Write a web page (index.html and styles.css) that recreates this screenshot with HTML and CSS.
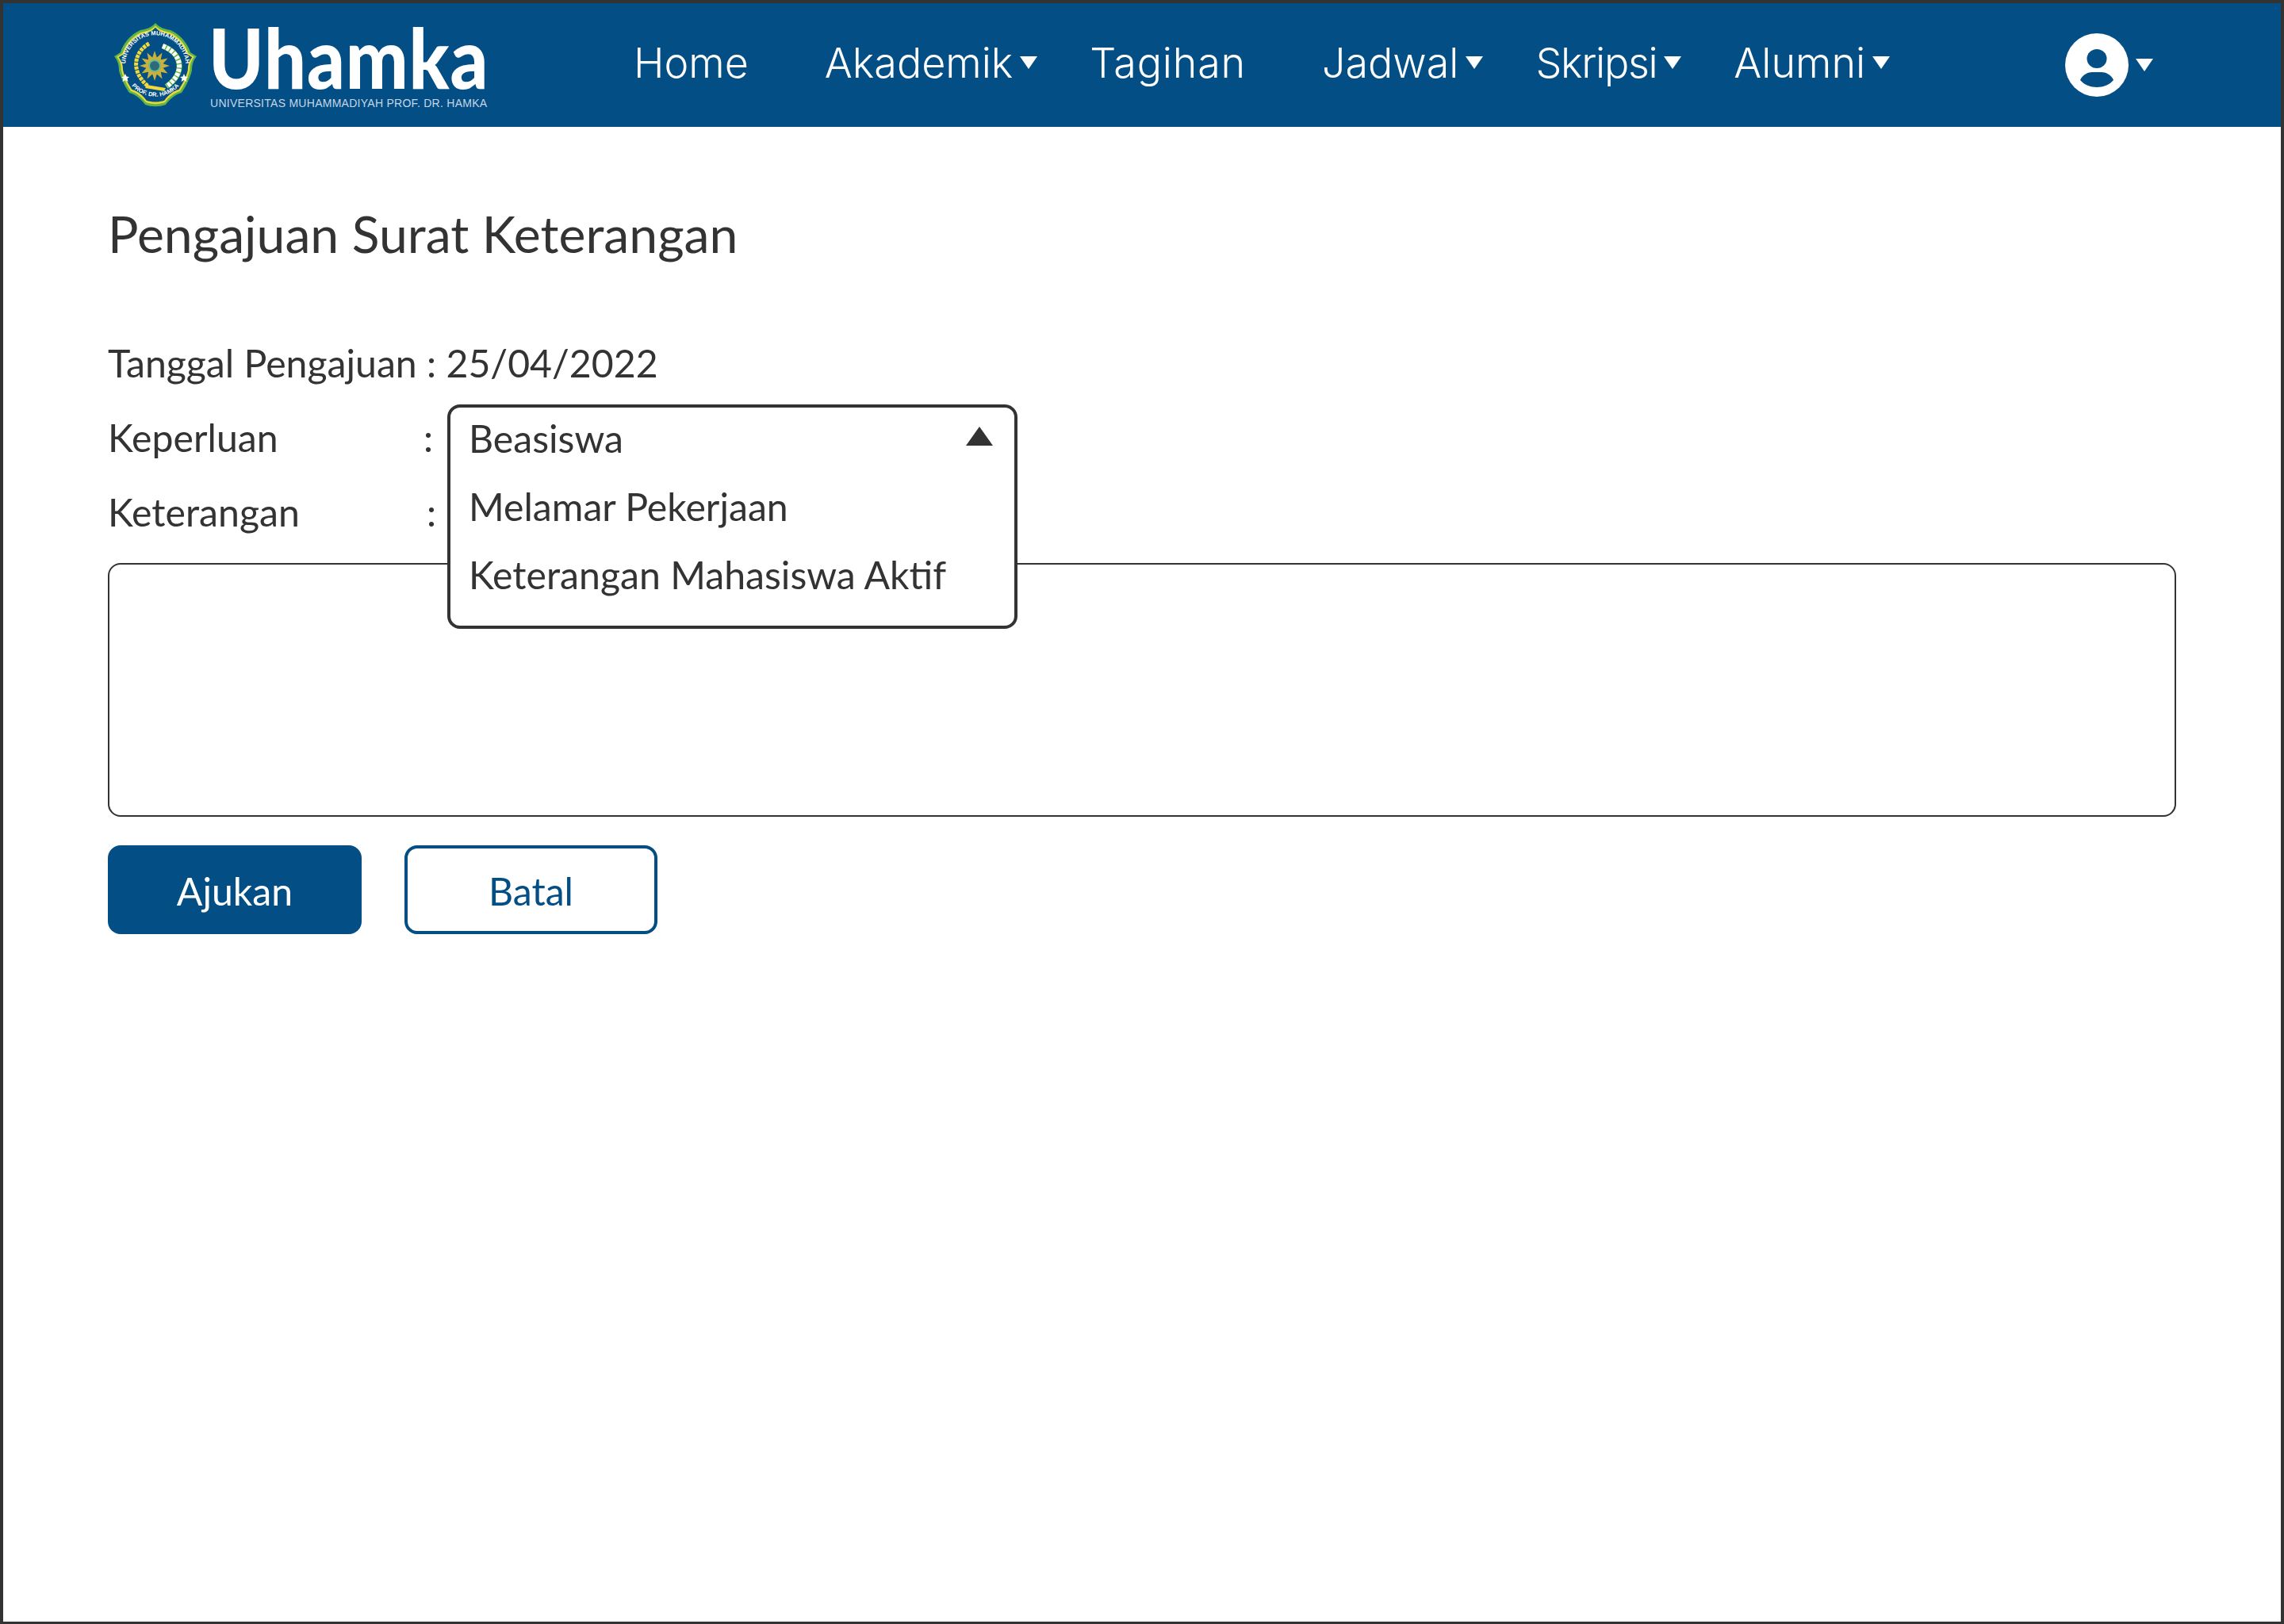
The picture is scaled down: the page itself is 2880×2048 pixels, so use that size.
FILE: index.html
```html
<!DOCTYPE html>
<html lang="en">
<head>
    <meta charset="UTF-8">
    <title>Pengajuan Surat Keterangan</title>
    <link rel="stylesheet" href="styles.css">
</head>
<body>
    <div class="frame">
        <header class="navbar">
            <div class="logo">
                <svg class="seal" viewBox="0 0 106 106" width="106" height="106">
                    <defs>
                        <path id="arc-top" d="M16 62 A38 38 0 1 1 90 62"/>
                        <path id="arc-bottom" d="M22 78 A40 40 0 0 0 84 78"/>
                    </defs>
                    <path fill="#5fb548" d="M53 0C58 6 66 8 72 9C84 14 94 26 97 37L105 42C100 48 99 54 99 60C96 72 90 82 86 88C78 90 70 97 66 103C58 106 48 106 40 103C36 97 28 90 20 88C16 82 10 72 7 60C7 54 6 48 1 42L9 37C12 26 22 14 34 9C40 8 48 6 53 0Z"/>
                    <path fill="#e8d83a" transform="translate(3.2 3.2) scale(.94)" d="M53 0C58 6 66 8 72 9C84 14 94 26 97 37L105 42C100 48 99 54 99 60C96 72 90 82 86 88C78 90 70 97 66 103C58 106 48 106 40 103C36 97 28 90 20 88C16 82 10 72 7 60C7 54 6 48 1 42L9 37C12 26 22 14 34 9C40 8 48 6 53 0Z"/>
                    <path fill="#024e85" transform="translate(5.8 5.8) scale(.89)" d="M53 0C58 6 66 8 72 9C84 14 94 26 97 37L105 42C100 48 99 54 99 60C96 72 90 82 86 88C78 90 70 97 66 103C58 106 48 106 40 103C36 97 28 90 20 88C16 82 10 72 7 60C7 54 6 48 1 42L9 37C12 26 22 14 34 9C40 8 48 6 53 0Z"/>
                    <text class="seal-text"><textPath href="#arc-top" startOffset="50%" text-anchor="middle">UNIVERSITAS MUHAMMADIYAH</textPath></text>
                    <text class="seal-text"><textPath href="#arc-bottom" startOffset="50%" text-anchor="middle">PROF. DR. HAMKA</textPath></text>
                    <path fill="none" stroke="#f2d83b" stroke-width="5" stroke-dasharray="4 1" d="M45 26C27 36 20 60 44 80"/>
                    <path fill="none" stroke="#5fb548" stroke-width="7" d="M62 29C86 38 92 62 67 80"/>
                    <path fill="none" stroke="#fff" stroke-width="6" stroke-dasharray="4 1.500" d="M62 29C86 38 92 62 67 80"/>
                    <path fill="#f2d83b" d="M42 78L66 82L64 86L40 82Z"/>
                    <path fill="#c9b23a" d="M52 35L54.800 43.400L61.500 37.500L59.800 46.200L68.500 44.500L62.600 51.200L71 54L62.600 56.800L68.500 63.500L59.800 61.800L61.500 70.500L54.800 64.600L52 73L49.200 64.600L42.500 70.500L44.200 61.800L35.500 63.500L41.400 56.800L33 54L41.400 51.200L35.500 44.500L44.200 46.200L42.500 37.500L49.200 43.400Z"/>
                    <circle cx="52" cy="54" r="8" fill="#6dbb8e"/>
                    <circle cx="52" cy="54" r="6" fill="#2f6a7c"/>
                    <path fill="#fff" d="M13 60L14.500 63.500L18 64L15.500 66L16.500 70L13 68L9.500 70L10.500 66L8 64L11.500 63.500Z" transform="translate(2 4)"/>
                    <path fill="#fff" d="M13 60L14.500 63.500L18 64L15.500 66L16.500 70L13 68L9.500 70L10.500 66L8 64L11.500 63.500Z" transform="translate(76 4)"/>
                </svg>
                <div class="logo-words">
                    <div class="logo-name">Uhamka</div>
                    <div class="logo-sub">UNIVERSITAS MUHAMMADIYAH PROF. DR. HAMKA</div>
                </div>
            </div>
            <nav class="nav">
                <a class="nav-link nav-plain">Home</a>
                <a class="nav-link">Akademik<span class="caret"></span></a>
                <a class="nav-link nav-plain nav-wide">Tagihan</a>
                <a class="nav-link">Jadwal<span class="caret"></span></a>
                <a class="nav-link nav-tight">Skripsi<span class="caret"></span></a>
                <a class="nav-link">Alumni<span class="caret"></span></a>
            </nav>
            <div class="user">
                <svg class="avatar" viewBox="0 0 80 80" width="80" height="80">
                    <circle cx="40" cy="40" r="40" fill="#fff"/>
                    <ellipse cx="40" cy="32" rx="12.500" ry="12" fill="#024e85"/>
                    <path fill="#024e85" d="M19 59C22 52 29 49 34 49H46C51 49 58 52 61 59C56 65 48 68 40 68C32 68 24 65 19 59Z"/>
                </svg>
                <span class="caret"></span>
            </div>
        </header>

        <main class="content">
            <h1 class="title">Pengajuan Surat Keterangan</h1>
            <div class="fields">
                <div class="row">Tanggal Pengajuan : 25/04/2022</div>
                <div class="row"><span class="row-label">Keperluan</span><span>:</span></div>
                <div class="row"><span class="row-label row-label-wide">Keterangan</span><span>:</span></div>

                <div class="dropdown">
                    <div class="dropdown-item">Beasiswa<span class="caret-up"></span></div>
                    <div class="dropdown-item">Melamar Pekerjaan</div>
                    <div class="dropdown-item">Keterangan Mahasiswa Aktif</div>
                </div>
            </div>
            <div class="textbox"></div>
            <div class="actions">
                <button type="button" class="btn btn-primary">Ajukan</button>
                <button type="button" class="btn btn-outline">Batal</button>
            </div>
        </main>
    </div>
</body>
</html>
```

FILE: styles.css
```css
body {
    margin: 0;
    font-family: Lato, sans-serif;
    color: #333;
    background-color: #fff;
}
.frame {
    width: 2880px;
    height: 2048px;
    box-sizing: border-box;
    border: 4px solid #333;
    border-bottom-width: 3px;
    overflow: hidden;
}

/* top bar */
.navbar {
    display: flex;
    align-items: center;
    height: 156px;
    padding-left: 139px;
    background-color: #024e85;
    color: #fff;
}
.logo {
    display: flex;
    align-items: center;
    width: 656px;
}
.seal {
    flex: none;
}
.seal-text {
    font-family: "Liberation Sans", sans-serif;
    font-size: 7.5px;
    font-weight: 700;
    fill: #fff;
}
.logo-words {
    margin-left: 18px;
    margin-top: 4px;
}
.logo-name {
    margin-left: -4px;
    font-size: 104px;
    font-weight: 900;
    line-height: 84px;
    letter-spacing: 1px;
    transform: scaleX(.9);
    transform-origin: left center;
}
.logo-sub {
    margin-top: 8px;
    margin-left: -2px;
    font-family: "Liberation Sans", sans-serif;
    font-size: 14px;
    line-height: 16px;
    letter-spacing: 0.27px;
    color: #c6d6e4;
    white-space: nowrap;
}
.nav {
    display: flex;
    align-items: center;
    gap: 66px;
    width: 1805px;
    margin-bottom: 6px;
}
.nav-link {
    display: flex;
    align-items: center;
    font-family: Inter, sans-serif;
    font-size: 52px;
    font-weight: 300;
    white-space: nowrap;
}
.nav-plain {
    margin-right: 30px;
}
.nav-wide {
    letter-spacing: 0.8px;
}
.nav-tight {
    letter-spacing: -1.3px;
}
.caret {
    width: 0;
    height: 0;
    margin-left: 9px;
    border-left: 11px solid transparent;
    border-right: 11px solid transparent;
    border-top: 16px solid #fff;
}
.user {
    display: flex;
    align-items: center;
}
.avatar {
    flex: none;
}

/* form */
.content {
    padding: 0 132px;
}
.title {
    margin: 97px 0 0;
    font-size: 64.3px;
    font-weight: 400;
    line-height: 76px;
}
.fields {
    position: relative;
    margin-top: 77px;
}
.row {
    display: flex;
    align-items: center;
    height: 94px;
    font-size: 48.2px;
    white-space: pre;
}
.row-label {
    width: 398px;
}
.row-label-wide {
    width: 402px;
}
.dropdown {
    position: absolute;
    top: 100px;
    left: 428px;
    width: 719px;
    height: 283px;
    box-sizing: border-box;
    padding: 0 23px;
    border: 4px solid #333;
    border-radius: 16px;
    background-color: #fff;
    font-size: 48.2px;
}
.dropdown-item {
    display: flex;
    align-items: center;
    justify-content: space-between;
    height: 86px;
}
.dropdown-item:first-child {
    margin-top: -5px;
}
.caret-up {
    width: 0;
    height: 0;
    margin-right: 4px;
    margin-bottom: 4px;
    border-left: 17px solid transparent;
    border-right: 17px solid transparent;
    border-bottom: 24px solid #333;
}
.textbox {
    box-sizing: border-box;
    height: 320px;
    margin-top: 18px;
    border: 2px solid #333;
    border-radius: 16px;
}
.actions {
    display: flex;
    gap: 54px;
    margin-top: 36px;
}
.btn {
    width: 320px;
    height: 112px;
    box-sizing: border-box;
    padding-top: 3px;
    border-radius: 16px;
    font-family: Lato, sans-serif;
    font-size: 48.2px;
}
.btn-primary {
    border: none;
    background-color: #024e85;
    color: #fff;
}
.btn-outline {
    width: 319px;
    border: 4px solid #024e85;
    background-color: #fff;
    color: #024e85;
}
```
